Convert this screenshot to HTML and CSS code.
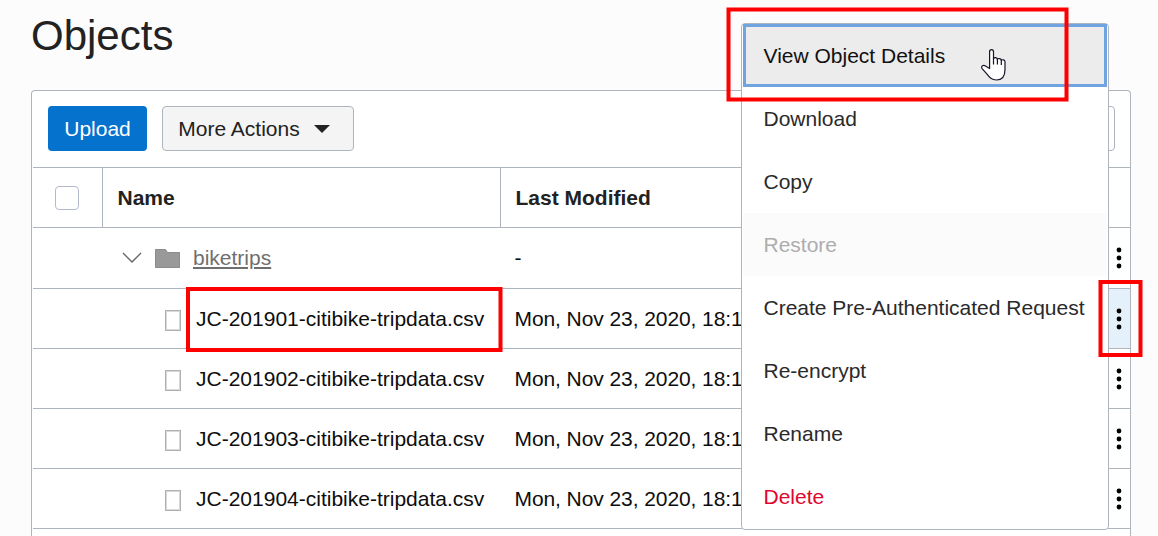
FILE: index.html
```html
<!DOCTYPE html>
<html lang="en">
<head>
<meta charset="utf-8">
<title>Objects</title>
<link rel="stylesheet" href="styles.css">
</head>
<body>
<svg class="defs" width="0" height="0" aria-hidden="true">
  <symbol id="dots" viewBox="0 0 6 22"><circle cx="3" cy="3" r="2.4"/><circle cx="3" cy="11" r="2.4"/><circle cx="3" cy="19" r="2.4"/></symbol>
  <symbol id="file" viewBox="0 0 16 21"><rect x="1" y="1" width="14" height="19" fill="#fff" stroke="#d9d9d9" stroke-width="2"/><rect x=".5" y=".5" width="15" height="20" fill="none" stroke="#b0b0b0"/></symbol>
</svg>
<h1 class="title">Objects</h1>
<main class="card">
  <div class="toolbar">
    <button class="btn primary">Upload</button>
    <button class="btn more">More Actions<svg width="16" height="8" viewBox="0 0 16 8"><path d="M0 0H16L8 8Z" fill="#222"/></svg></button>
    <div class="search"></div>
  </div>
  <div class="row head">
    <div class="cell check"><span class="box"></span></div>
    <div class="cell name">Name</div>
    <div class="cell date">Last Modified</div>
    <div class="cell"></div>
  </div>
  <div class="row folder">
    <div class="cell"></div>
    <div class="cell name">
      <svg class="chev" width="20" height="12" viewBox="0 0 20 12"><path d="M1 1L10 10L19 1" fill="none" stroke="#666" stroke-width="1.4"/></svg>
      <svg class="dir" width="25" height="19" viewBox="0 0 25 19"><path d="M.5 .5H10.5L12.5 3.5H24.5V18.5H.5Z" fill="#999" stroke="#8b8b8b"/></svg>
      <a class="link">biketrips</a>
    </div>
    <div class="cell date">-</div>
    <div class="cell act"><svg width="6" height="22"><use href="#dots"/></svg></div>
  </div>
  <div class="row">
    <div class="cell"></div>
    <div class="cell name"><svg class="file" width="16" height="21"><use href="#file"/></svg>JC-201901-citibike-tripdata.csv</div>
    <div class="cell date">Mon, Nov 23, 2020, 18:1</div>
    <div class="cell act active"><svg width="6" height="22"><use href="#dots"/></svg></div>
  </div>
  <div class="row">
    <div class="cell"></div>
    <div class="cell name"><svg class="file" width="16" height="21"><use href="#file"/></svg>JC-201902-citibike-tripdata.csv</div>
    <div class="cell date">Mon, Nov 23, 2020, 18:1</div>
    <div class="cell act"><svg width="6" height="22"><use href="#dots"/></svg></div>
  </div>
  <div class="row">
    <div class="cell"></div>
    <div class="cell name"><svg class="file" width="16" height="21"><use href="#file"/></svg>JC-201903-citibike-tripdata.csv</div>
    <div class="cell date">Mon, Nov 23, 2020, 18:1</div>
    <div class="cell act"><svg width="6" height="22"><use href="#dots"/></svg></div>
  </div>
  <div class="row">
    <div class="cell"></div>
    <div class="cell name"><svg class="file" width="16" height="21"><use href="#file"/></svg>JC-201904-citibike-tripdata.csv</div>
    <div class="cell date">Mon, Nov 23, 2020, 18:1</div>
    <div class="cell act"><svg width="6" height="22"><use href="#dots"/></svg></div>
  </div>
  <div class="row last"></div>
</main>
<div class="menu">
  <div class="item focus">View Object Details</div>
  <div class="item">Download</div>
  <div class="item">Copy</div>
  <div class="item disabled">Restore</div>
  <div class="item">Create Pre-Authenticated Request</div>
  <div class="item">Re-encrypt</div>
  <div class="item">Rename</div>
  <div class="item danger">Delete</div>
</div>
<svg class="marks" width="1158" height="536" viewBox="0 0 1158 536">
  <g fill="none" stroke="#f00" stroke-width="4">
    <rect x="728.5" y="9.5" width="338" height="90"/>
    <rect x="188" y="289" width="312.500" height="61"/>
    <rect x="1100.500" y="282" width="40" height="73"/>
  </g>
  <path d="M989.600 68.500V51.800C989.600 49 993.500 49 993.500 51.800V58.600C994.500 57 997.200 57.400 997.400 59.400C998.500 57.900 1001.100 58.400 1001.300 60.300C1002.500 59.200 1005 59.800 1005 62V69.500C1005 76.300 1002 80 996.500 80C991.500 80 989.500 77.500 987 74.200L981.900 68.300C980.700 66 983.300 64.700 985.500 66Z" fill="#fff" stroke="#15152a" stroke-width="1.2" stroke-linejoin="round"/>
  <path d="M993.500 58V64.500M997.400 59V64.500M1001.300 60V65" fill="none" stroke="#15152a" stroke-width="1.200"/>
</svg>
</body>
</html>
```
FILE: styles.css
```css
* { box-sizing: border-box; }
body {
  margin: 0;
  height: 536px;
  overflow: hidden;
  position: relative;
  background: #fcfcfc;
  color: #222;
  font: 21px/24px "Liberation Sans", Arial, sans-serif;
}
.defs { position: absolute; }
.title {
  margin: 0;
  height: 90px;
  padding: 13px 0 0 31px;
  font-size: 42px;
  line-height: 46px;
  font-weight: 400;
}
.card {
  width: 1100px;
  height: 446px;
  margin-left: 31px;
  border: 1px solid #afb5be;
  border-bottom: 0;
  border-radius: 4px 4px 0 0;
  background: #fff;
}
.toolbar {
  display: flex;
  gap: 15px;
  height: 76px;
  padding: 15px 15px 0 16px;
}
.btn {
  display: flex;
  align-items: center;
  justify-content: center;
  height: 45px;
  padding: 0;
  border-radius: 4px;
  font: inherit;
}
.primary { width: 99px; border: 0; background: #0572ce; color: #fff; }
.more { width: 192px; gap: 14px; padding-right: 8px; border: 1px solid #afb5be; background: #f4f4f4; color: #222; }
.search { width: 300px; height: 45px; margin-left: auto; border: 1px solid #afb5be; border-radius: 4px; }
.row {
  display: grid;
  grid-template-columns: 70px 398px 1fr 23px;
  height: 60px;
  margin-left: 1px;
  border-top: 1px solid #afb5be;
  color: #0d0d0d;
}
.folder { height: 61px; }
.last { height: 8px; }
.cell { display: flex; align-items: center; padding-top: 1px; white-space: nowrap; }
.folder .cell { padding-top: 0; }
.head { font-weight: 700; color: #222; }
.head .check, .head .name { border-right: 1px solid #afb5be; }
.head .name { padding-left: 14.5px; }
.head .date { padding-left: 14.5px; }
.check { padding-left: 22px; }
.box { width: 24px; height: 24px; border: 1px solid #b4bacb; border-radius: 4px; }
.date { padding-left: 13.5px; letter-spacing: -0.08px; }
.head .date { letter-spacing: 0; }
.chev { margin-left: 19px; }
.dir { margin: 0 13px 0 13px; }
.link { color: #6f6f6f; text-decoration: underline; text-decoration-thickness: 2px; text-underline-offset: 2px; }
.file { margin: 3px 15px 0 62px; }
.act { justify-content: center; padding-top: 0; }
.active { background: #e4f0fa; }
.menu {
  position: absolute;
  left: 741px;
  top: 23px;
  width: 368px;
  height: 507px;
  padding: 0 1px;
  border: 1px solid #afb5be;
  border-radius: 4px;
  background: #fff;
}
.item { display: flex; align-items: center; height: 63px; padding: 1px 0 0 20.5px; color: #2a2a2a; white-space: nowrap; }
.focus { border: 3px solid #70a4e0; padding: 1px 0 0 17.5px; background: #ececec; color: #111; }
.disabled { background: #fbfbfb; color: #adadad; }
.danger { color: #e0052d; }
.marks { position: absolute; left: 0; top: 0; }
```
